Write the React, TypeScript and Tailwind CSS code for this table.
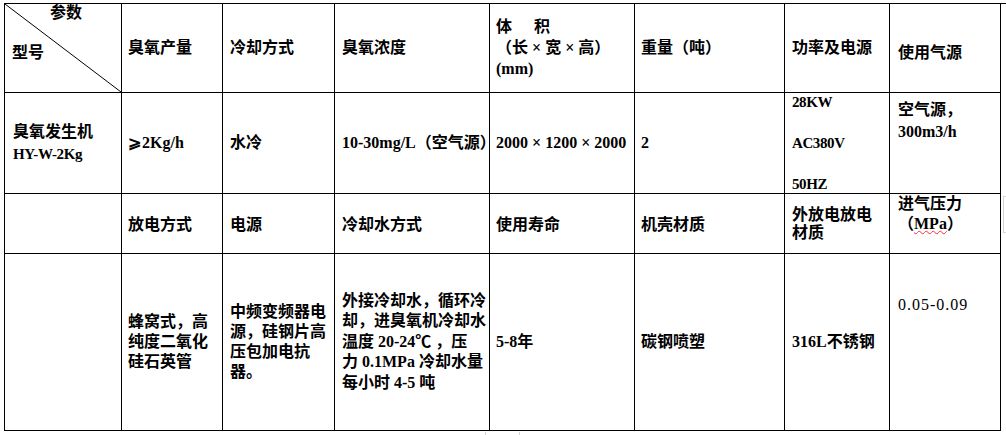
import type { ReactNode } from "react";

const FONT = { fontFamily: '"Liberation Serif", "Noto Sans CJK SC", serif' };

function Cell({ children, className = "" }: { children?: ReactNode; className?: string }) {
	return <div className={`border-r border-b border-black ${className}`}>{children}</div>;
}

const X = () => <span className="mx-[4px]">×</span>;

export default function App() {
	return (
		<div className="relative h-[435px] w-[1006px] bg-white text-[16px] text-black" style={FONT}>
			<div className="ml-[4px] pt-[3px]">
				<div className="grid grid-cols-[117px_101px_112px_155px_145px_150px_105px_111px] grid-rows-[89px_101px_60px_177px] border-t border-l border-black font-bold whitespace-nowrap">
					{/* header row */}
					<Cell className="relative">
						<svg className="absolute inset-0" width="116" height="88" viewBox="0 0 116 88">
							<line x1="0" y1="0" x2="116" y2="88" stroke="black" strokeWidth="1" />
						</svg>
						<div className="relative leading-[18px]">
							<div className="pl-[45px]">参数</div>
							<div className="mt-[21px] pl-[7px] leading-[20px]">型号</div>
						</div>
					</Cell>
					<Cell className="flex items-center px-[6px]">臭氧产量</Cell>
					<Cell className="flex items-center px-[7px]">冷却方式</Cell>
					<Cell className="flex items-center px-[7px]">臭氧浓度</Cell>
					<Cell className="px-[6px] pt-[12px] leading-[21px]">
						<div>
							<span className="inline-block w-[38px]">体</span>积
						</div>
						<div>（长<X />宽<X />高）</div>
						<div>(mm)</div>
					</Cell>
					<Cell className="flex items-center px-[6px]">重量（吨）</Cell>
					<Cell className="flex items-center px-[7px]">功率及电源</Cell>
					<Cell className="flex items-center px-[8px] pt-[10px]">使用气源</Cell>

					{/* row 2 */}
					<Cell className="flex flex-col justify-center px-[8px] leading-[23px]">
						<div>臭氧发生机</div>
						<div className="text-[15px] tracking-[-0.4px]">HY-W-2Kg</div>
					</Cell>
					<Cell className="flex items-center px-[6px]">
						<span className="mr-[1px]">⩾</span>2Kg/h
					</Cell>
					<Cell className="flex items-center px-[7px]">水冷</Cell>
					<Cell className="flex items-center px-[7px]">10-30mg/L（空气源）</Cell>
					<Cell className="flex items-center px-[6px]">2000<X />1200<X />2000</Cell>
					<Cell className="flex items-center px-[6px]">2</Cell>
					<Cell className="flex flex-col justify-between px-[7px] py-[1px] text-[15px] leading-[16px] tracking-[-0.4px]">
						<div>28KW</div>
						<div>AC380V</div>
						<div>50HZ</div>
					</Cell>
					<Cell className="px-[8px] pt-[6px] leading-[22px]">
						<div>空气源，</div>
						<div>300m3/h</div>
					</Cell>

					{/* row 3 */}
					<Cell />
					<Cell className="flex items-center px-[6px] pt-[2px]">放电方式</Cell>
					<Cell className="flex items-center px-[7px] pt-[2px]">电源</Cell>
					<Cell className="flex items-center px-[7px] pt-[2px]">冷却水方式</Cell>
					<Cell className="flex items-center px-[6px] pt-[2px]">使用寿命</Cell>
					<Cell className="flex items-center px-[6px] pt-[2px]">机壳材质</Cell>
					<Cell className="flex flex-col justify-center px-[7px] leading-[18px]">
						<div>外放电放电</div>
						<div>材质</div>
					</Cell>
					<Cell className="px-[8px] leading-[20px]">
						<div>进气压力</div>
						<div>
							（<span className="underline decoration-red-500 decoration-wavy decoration-1">MPa</span>）
						</div>
					</Cell>

					{/* row 4 */}
					<Cell />
					<Cell className="flex flex-col justify-center px-[6px] leading-[20px]">
						<div>蜂窝式，高</div>
						<div>纯度二氧化</div>
						<div>硅石英管</div>
					</Cell>
					<Cell className="flex flex-col justify-center px-[7px] leading-[20px]">
						<div>中频变频器电</div>
						<div>源，硅钢片高</div>
						<div>压包加电抗</div>
						<div>器。</div>
					</Cell>
					<Cell className="flex flex-col justify-center px-[7px] leading-[20.5px]">
						<div>外接冷却水，循环冷</div>
						<div>却，进臭氧机冷却水</div>
						<div>温度 20-24℃ ，压</div>
						<div>力 0.1MPa 冷却水量</div>
						<div>每小时 4-5 吨</div>
					</Cell>
					<Cell className="flex items-center px-[6px]">5-8年</Cell>
					<Cell className="flex items-center px-[6px]">碳钢喷塑</Cell>
					<Cell className="flex items-center px-[7px]">316L不锈钢</Cell>
					<Cell className="px-[8px] pt-[41px] leading-[20px] font-normal tracking-[1px]">0.05-0.09</Cell>
				</div>
			</div>
			{/* faint selection markers outside the table */}
			<div className="absolute top-[196px] left-[1003px] h-[37px] w-[3px] border-t border-b border-l border-gray-300" />
			<div className="absolute top-[432px] left-[485px] h-[3px] w-[35px] border-r border-l border-gray-300" />
		</div>
	);
}
